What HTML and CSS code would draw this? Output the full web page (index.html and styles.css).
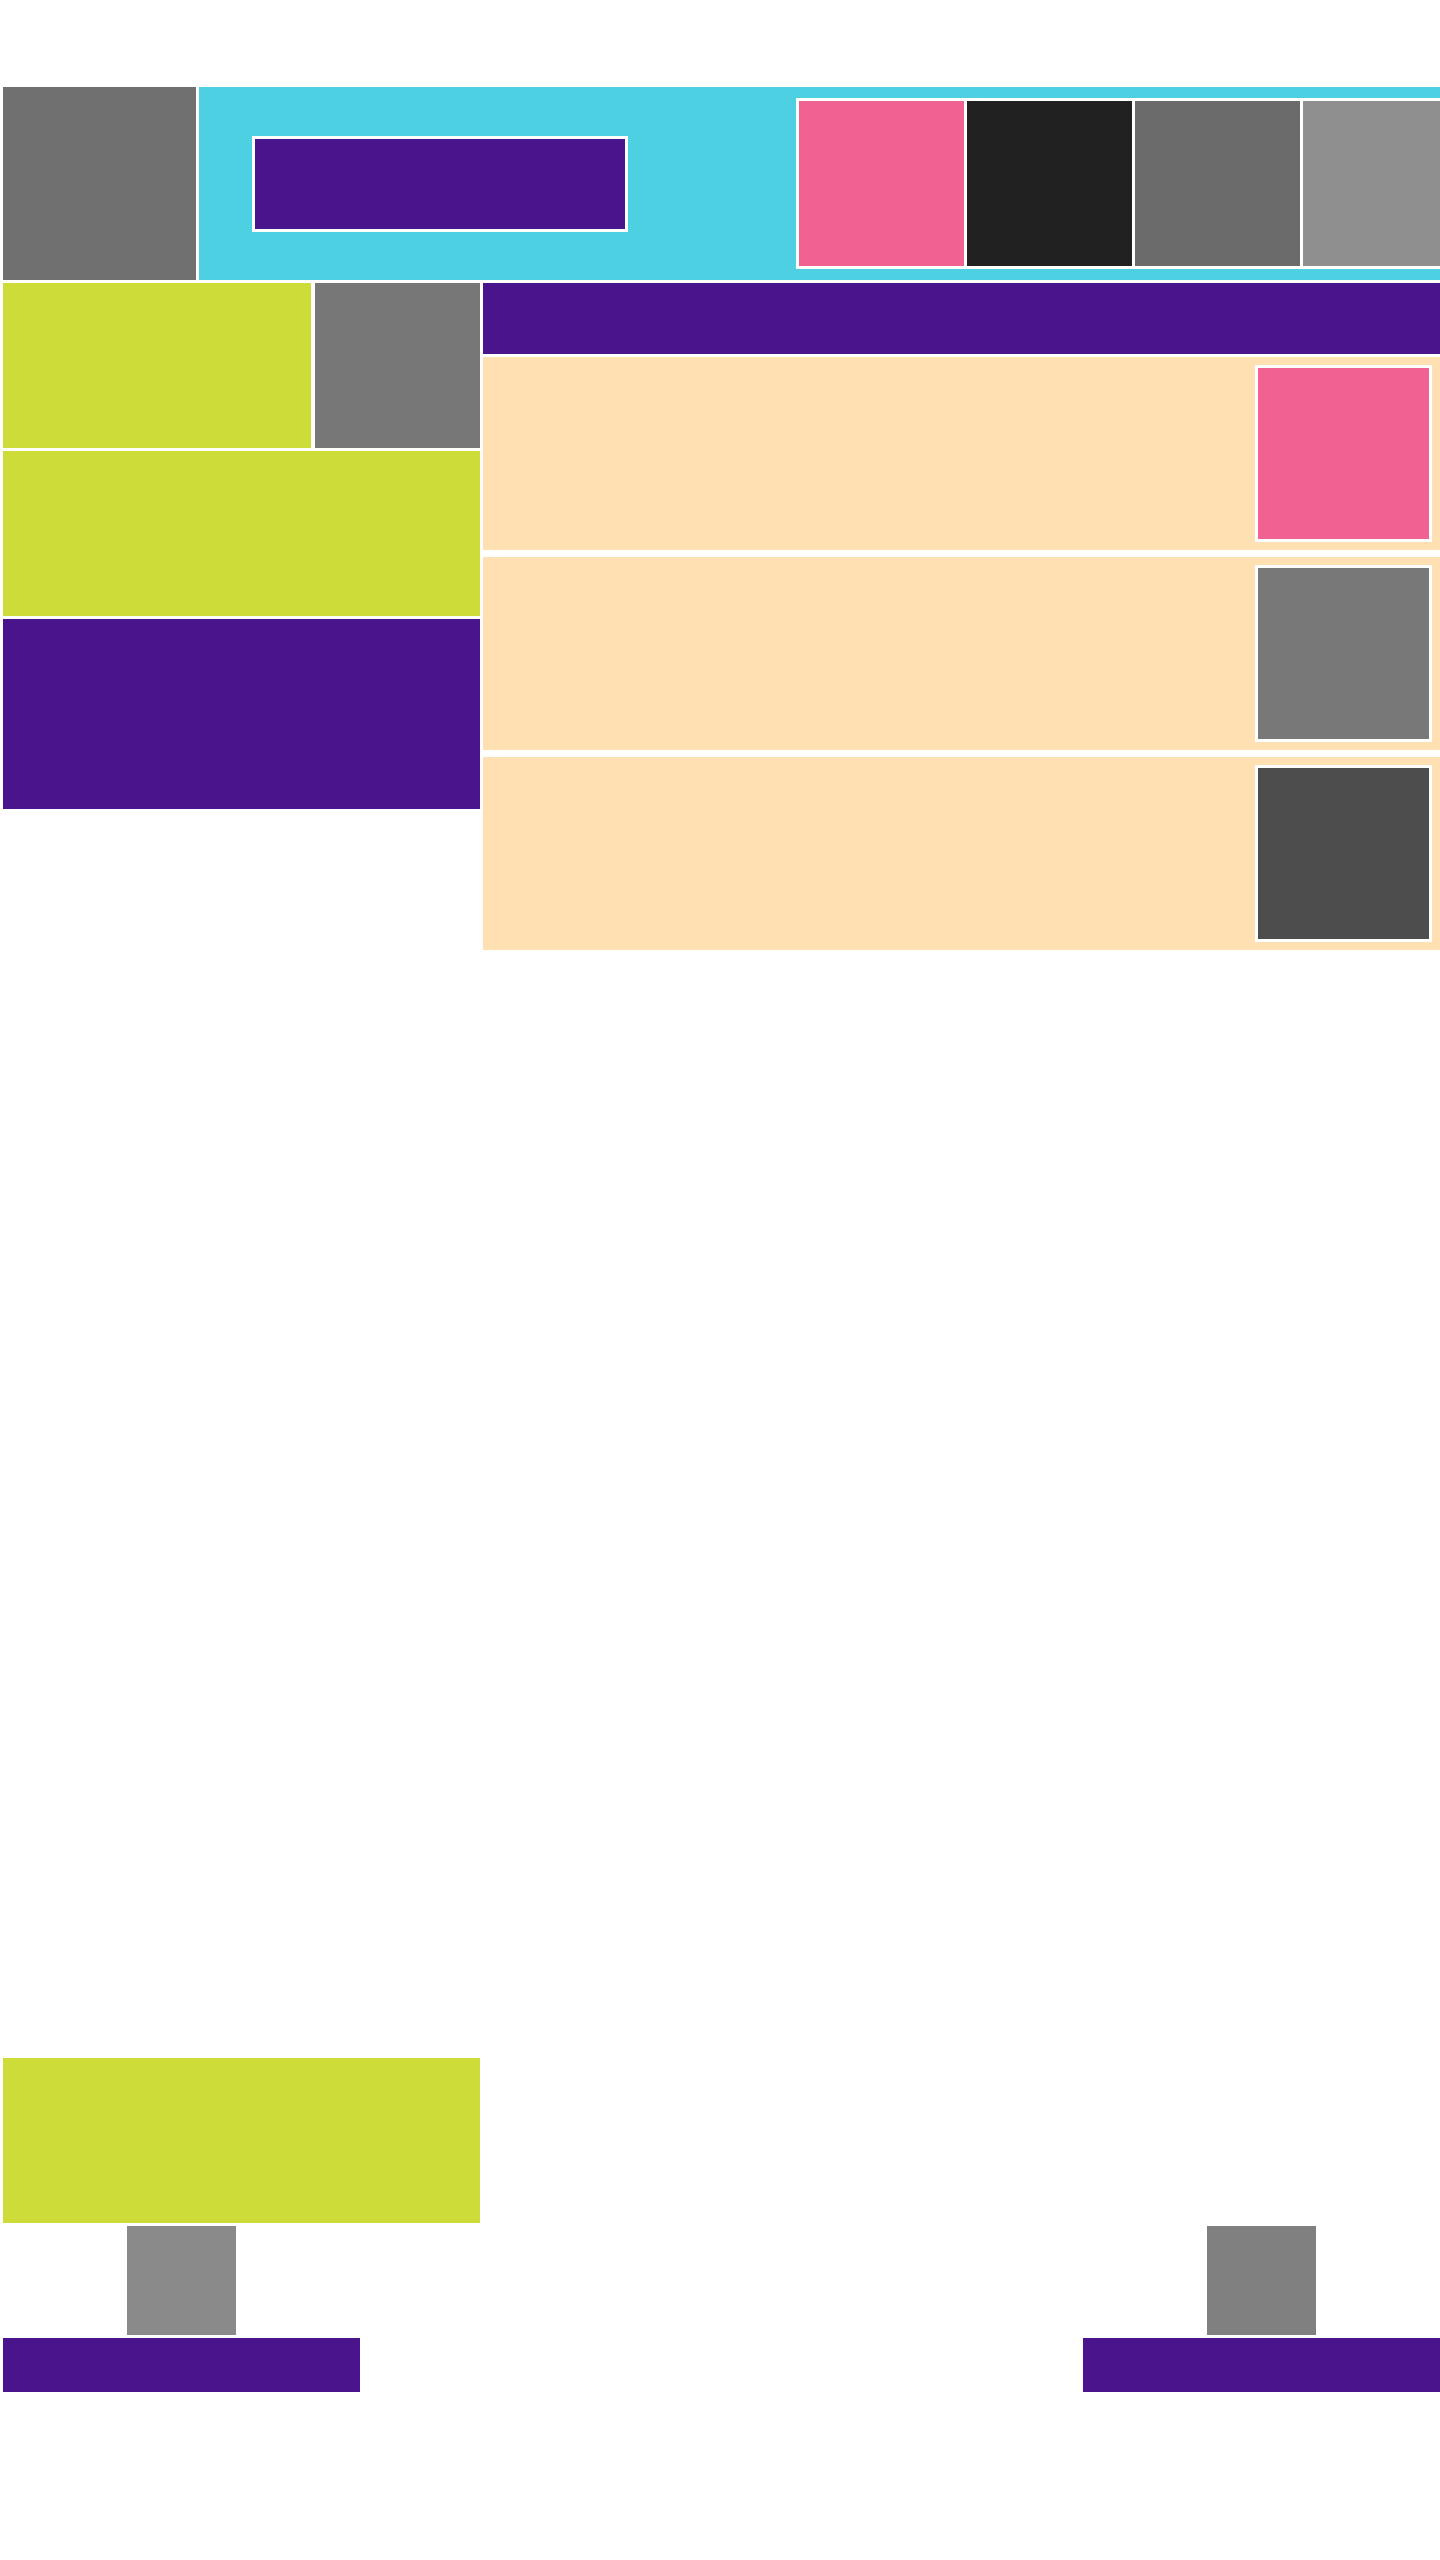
FILE: index.html
```html
<!DOCTYPE html>
<html>

<head>
    <meta charset="utf-8">
    <title>Mosaico</title>
    <link rel="stylesheet" href="styles.css">
</head>

<body>
    <div id="pagina">
        <div id="topo">
            <div id="logo"></div>
            <div id="faixa">
                <div id="titulo"></div>
                <div id="miniaturas">
                    <div class="mini rosa"></div>
                    <div class="mini preto"></div>
                    <div class="mini cinza"></div>
                    <div class="mini claro"></div>
                </div>
            </div>
        </div>

        <div id="conteudo">
            <div id="lateral">
                <div class="linha">
                    <div class="bloco-lima"></div>
                    <div class="bloco-cinza"></div>
                </div>
                <div class="bloco-lima alto"></div>
                <div class="bloco-roxo"></div>
            </div>

            <div id="lista">
                <div id="lista-titulo"></div>
                <div class="item">
                    <div class="foto rosa"></div>
                </div>
                <div class="item">
                    <div class="foto cinza-medio"></div>
                </div>
                <div class="item">
                    <div class="foto escuro"></div>
                </div>
            </div>
        </div>

        <div id="rodape">
            <div class="bloco-lima rodape-lima"></div>
            <div id="rodape-linha">
                <div class="coluna">
                    <div class="quadrado q1"></div>
                    <div class="barra"></div>
                </div>
                <div class="coluna">
                    <div class="quadrado q2"></div>
                    <div class="barra"></div>
                </div>
            </div>
        </div>
    </div>
</body>

</html>
```

FILE: styles.css
```css
* {
    box-sizing: border-box;
}

body {
    margin: 0;
    background-color: #ffffff;
    font-family: "Liberation Sans", Arial, sans-serif;
}

#pagina {
    width: 1440px;
    padding: 87px 0 0 3px;
    overflow: hidden;
}

/* topo */
#topo {
    display: flex;
    gap: 3px;
    height: 193px;
}

#logo {
    width: 193px;
    background-color: #707070;
}

#faixa {
    flex: 1;
    display: flex;
    align-items: center;
    padding-left: 53px;
    background-color: #4dd0e1;
    overflow: hidden;
}

#titulo {
    flex-shrink: 0;
    width: 376px;
    height: 96px;
    background-color: #4a148c;
    border: 3px solid #ffffff;
}

#miniaturas {
    flex-shrink: 0;
    display: flex;
    gap: 3px;
    margin-left: 168px;
    padding: 3px;
    background-color: #ffffff;
}

.mini {
    width: 165px;
    height: 165px;
}

.rosa {
    background-color: #f06292;
}

.preto {
    background-color: #212121;
}

.cinza {
    background-color: #6b6b6b;
}

.claro {
    background-color: #8f8f8f;
}

/* conteudo */
#conteudo {
    display: flex;
    gap: 3px;
    margin-top: 3px;
}

#lateral {
    width: 477px;
    display: flex;
    flex-direction: column;
    gap: 3px;
}

.linha {
    display: flex;
    gap: 4px;
}

.bloco-lima {
    flex: 1;
    height: 165px;
    background-color: #cddc39;
}

.bloco-cinza {
    width: 165px;
    height: 165px;
    background-color: #777777;
}

.bloco-lima.alto {
    flex: none;
}

.bloco-roxo {
    height: 190px;
    background-color: #4a148c;
}

#lista {
    flex: 1;
    display: flex;
    flex-direction: column;
    gap: 7px;
}

#lista-titulo {
    height: 71px;
    margin-bottom: -4px;
    background-color: #4a148c;
}

.item {
    display: flex;
    justify-content: flex-end;
    padding: 8px;
    background-color: #ffe0b2;
}

.foto {
    width: 177px;
    height: 177px;
    border: 3px solid #ffffff;
}

.cinza-medio {
    background-color: #787878;
}

.escuro {
    background-color: #4d4d4d;
}

/* rodape */
#rodape {
    margin-top: 1108px;
    display: flex;
    flex-direction: column;
    gap: 3px;
}

.rodape-lima {
    flex: none;
    width: 477px;
}

#rodape-linha {
    display: flex;
    justify-content: space-between;
}

.coluna {
    width: 357px;
    display: flex;
    flex-direction: column;
    align-items: center;
    gap: 3px;
}

.quadrado {
    width: 109px;
    height: 109px;
}

.q1 {
    background-color: #8a8a8a;
}

.q2 {
    background-color: #808080;
}

.barra {
    align-self: stretch;
    height: 54px;
    background-color: #4a148c;
}
```
